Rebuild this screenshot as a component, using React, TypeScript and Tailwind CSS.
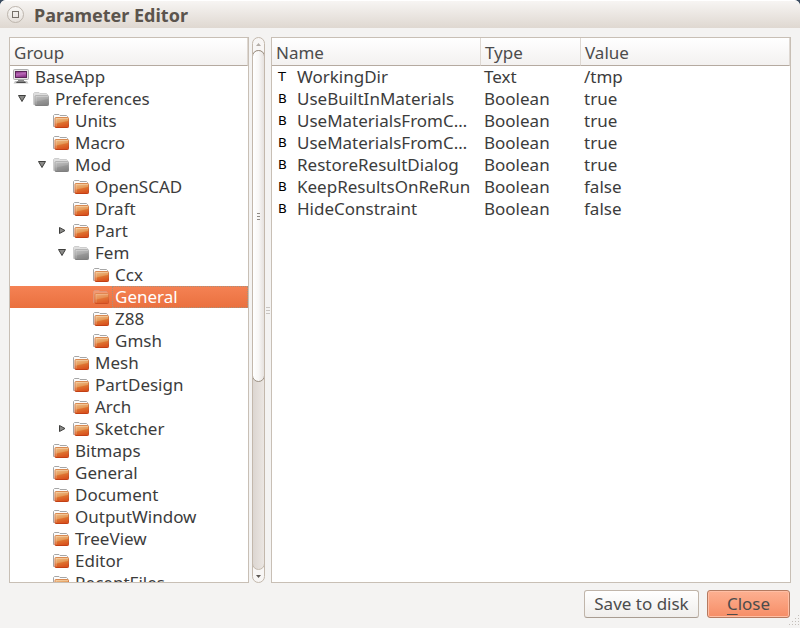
import React from "react";

type Node = { label: string; depth: number; icon?: "computer" | "open"; arrow?: "down" | "right"; selected?: boolean };

const nodes: Node[] = [
  { label: "BaseApp", depth: 0, icon: "computer" },
  { label: "Preferences", depth: 1, icon: "open", arrow: "down" },
  { label: "Units", depth: 2 },
  { label: "Macro", depth: 2 },
  { label: "Mod", depth: 2, icon: "open", arrow: "down" },
  { label: "OpenSCAD", depth: 3 },
  { label: "Draft", depth: 3 },
  { label: "Part", depth: 3, arrow: "right" },
  { label: "Fem", depth: 3, icon: "open", arrow: "down" },
  { label: "Ccx", depth: 4 },
  { label: "General", depth: 4, selected: true },
  { label: "Z88", depth: 4 },
  { label: "Gmsh", depth: 4 },
  { label: "Mesh", depth: 3 },
  { label: "PartDesign", depth: 3 },
  { label: "Arch", depth: 3 },
  { label: "Sketcher", depth: 3, arrow: "right" },
  { label: "Bitmaps", depth: 2 },
  { label: "General", depth: 2 },
  { label: "Document", depth: 2 },
  { label: "OutputWindow", depth: 2 },
  { label: "TreeView", depth: 2 },
  { label: "Editor", depth: 2 },
  { label: "RecentFiles", depth: 2 },
];

const params = [
  ["T", "WorkingDir", "Text", "/tmp"],
  ["B", "UseBuiltInMaterials", "Boolean", "true"],
  ["B", "UseMaterialsFromC…", "Boolean", "true"],
  ["B", "UseMaterialsFromC…", "Boolean", "true"],
  ["B", "RestoreResultDialog", "Boolean", "true"],
  ["B", "KeepResultsOnReRun", "Boolean", "false"],
  ["B", "HideConstraint", "Boolean", "false"],
];

const indent = ["w-0", "w-0", "w-5", "w-10", "w-15"];

function Gradients() {
  return (
    <svg className="absolute size-0" aria-hidden="true">
      <defs>
        <linearGradient id="orange" x1="0.1" y1="0" x2="0.4" y2="1">
          <stop offset="0" stopColor="#efc08c" />
          <stop offset="0.5" stopColor="#e59a58" />
          <stop offset="0.6" stopColor="#de7230" />
          <stop offset="1" stopColor="#d9531e" />
        </linearGradient>
        <linearGradient id="gray" x1="0.1" y1="0" x2="0.4" y2="1">
          <stop offset="0" stopColor="#c2c2c2" />
          <stop offset="0.5" stopColor="#a9a9a9" />
          <stop offset="0.6" stopColor="#979797" />
          <stop offset="1" stopColor="#868686" />
        </linearGradient>
        <linearGradient id="orange-edge" x1="0" y1="0" x2="0" y2="1">
          <stop offset="0" stopColor="#d98a52" />
          <stop offset="1" stopColor="#c23f14" />
        </linearGradient>
        <linearGradient id="gray-edge" x1="0" y1="0" x2="0" y2="1">
          <stop offset="0" stopColor="#b4b4b4" />
          <stop offset="1" stopColor="#7f7f7f" />
        </linearGradient>
        <linearGradient id="screen" x1="0" y1="0" x2="0.3" y2="1">
          <stop offset="0" stopColor="#7d2f7b" />
          <stop offset="0.5" stopColor="#b968b8" />
          <stop offset="1" stopColor="#8a3488" />
        </linearGradient>
      </defs>
    </svg>
  );
}

function Folder({ selected }: { selected?: boolean }) {
  return (
    <svg viewBox="0 0 16 16" className={selected ? "size-4 shrink-0 opacity-70" : "size-4 shrink-0"} aria-hidden="true">
      <path
        d="M1.5 13.5H.5V2.5L1.5 1.5H6L7 2.5H13.5L14.5 3.5V5"
        fill={selected ? "#f4a583" : "#fcfcfc"}
        stroke={selected ? "#d9a088" : "#a6a6a6"}
      />
      <rect x="2" y="4.5" width="13.5" height="10" rx=".8" fill="url(#orange)" stroke="url(#orange-edge)" />
      <path d="M3 13.5V5.5H15" fill="none" stroke="#f9dfbf" opacity=".45" />
    </svg>
  );
}

function OpenFolder() {
  return (
    <svg viewBox="0 0 16 16" className="size-4 shrink-0" aria-hidden="true">
      <path d="M1.5 13.5H.5V2.5L1.5 1.5H6L7 2.5H13.5L14.5 3.5V5" fill="#dedede" stroke="#cdcdcd" />
      <rect x="2" y="4.5" width="13.5" height="10" rx=".8" fill="url(#gray)" stroke="url(#gray-edge)" />
      <path d="M3 13.5V5.5H15" fill="none" stroke="#e4e4e4" opacity=".4" />
    </svg>
  );
}

function Computer() {
  return (
    <svg viewBox="0 0 16 16" className="size-4 shrink-0" aria-hidden="true">
      <rect x=".5" y=".5" width="15" height="10" rx="1" fill="#e4e4e4" stroke="#adadad" />
      <rect x="2.5" y="2.5" width="11" height="6" fill="url(#screen)" stroke="#5a2458" />
      <path d="M5 11H11V12H5Z" fill="#8a8a8a" />
      <path d="M2 12H14L15.5 14.5H.5Z" fill="#c4c4c4" />
      <path d="M4 12.5H12L13 14H3Z" fill="#4a4a4a" />
    </svg>
  );
}

function Arrow({ dir }: { dir: "down" | "right" }) {
  return (
    <svg viewBox="0 0 10 10" className="size-2.5" aria-hidden="true">
      <path d={dir === "down" ? "M1.5 1.5H8.5L5 7.5Z" : "M2.5 1.5V7.5L8 4.5Z"} fill="#8a8a88" stroke="#3f3f3d" />
    </svg>
  );
}

function Grip({ className }: { className: string }) {
  return (
    <div className={`flex flex-col gap-0.5 ${className}`}>
      <i className="h-px" />
      <i className="h-px" />
      <i className="h-px" />
    </div>
  );
}

function ScrollBar() {
  return (
    <div className="ml-[3px] flex w-[13px] shrink-0 flex-col overflow-hidden rounded-full border border-[#c3b8ac] bg-[#f8f6f5]" aria-hidden="true">
      <div className="flex h-3 shrink-0 items-center justify-center">
        <svg viewBox="0 0 5 3" className="h-[3px] w-[5px]"><path d="M0 3L2.5 0L5 3Z" fill="#b3aca6" /></svg>
      </div>
      <div className="-mx-px min-h-0 flex-1 rounded-full border border-[#c3b8ac] bg-linear-to-r from-[#dcd6d1] to-[#ebe6e2]">
        <div className="-mx-px -mt-px flex h-[332px] items-center justify-center rounded-full border border-[#9c9184] bg-linear-to-r from-white via-[#f8f7f6] to-[#e6e2df]">
          <Grip className="w-[3px] [&>i]:bg-[#8f8a84]" />
        </div>
      </div>
      <div className="flex h-3 shrink-0 items-center justify-center">
        <svg viewBox="0 0 5 3" className="h-[3px] w-[5px]"><path d="M0 0L2.5 3L5 0Z" fill="#5c5854" /></svg>
      </div>
    </div>
  );
}

const header = "h-7 border-b border-[#b5aaa0] bg-linear-to-b from-white to-[#f3f1f0] pt-0.5 text-left font-normal text-[#4c4c4c]";

export default function App() {
  return (
    <div className="bg-[#3b4c60]">
      <div className="flex h-screen flex-col overflow-hidden rounded-t-md bg-[#f4f3f2] font-['Noto_Sans','Open_Sans',sans-serif] text-[17px] leading-[22px] text-[#3c3c3c]">
        <Gradients />
        <header className="flex h-7 shrink-0 items-center gap-2.5 border-t border-white bg-linear-to-b from-[#f7f5f3] to-[#dfd8d1] pl-[7px]">
          <button aria-label="Restore window" className="flex size-[17px] items-center justify-center rounded-full border border-[#bdb5ad] bg-linear-to-b from-[#f9f8f6] to-[#e6e0db]">
            <span className="size-[7px] border border-[#77716a]" />
          </button>
          <h1 className="text-[18px] font-bold text-[#5b544d]">Parameter Editor</h1>
        </header>

        <main className="flex min-h-0 flex-1 px-[9px] pt-[9px]">
          <section className="flex w-60 shrink-0 flex-col overflow-hidden border border-[#c8bfb5] bg-white">
            <div className={`${header} flex shrink-0 items-center border-r border-r-[#ded8d2] pl-1`}>Group</div>
            <ul role="tree" aria-label="Group" className="min-h-0 flex-1 overflow-hidden">
              {nodes.map((n, i) => (
                <li
                  key={i}
                  role="treeitem"
                  aria-level={n.depth + 1}
                  aria-selected={!!n.selected}
                  className={`flex h-[22px] items-center pl-[3px] ${n.selected ? "bg-linear-to-b from-[#f58254] to-[#ea703e] text-white" : ""}`}
                >
                  <span className={`shrink-0 ${indent[n.depth]}`} />
                  {n.depth > 0 && (
                    <span className="flex w-5 shrink-0 pl-1">{n.arrow && <Arrow dir={n.arrow} />}</span>
                  )}
                  {n.icon === "computer" ? <Computer /> : n.icon === "open" ? <OpenFolder /> : <Folder selected={n.selected} />}
                  <span className={`ml-[3px] flex-1 self-stretch border border-dotted pl-0.5 leading-5 ${n.selected ? "border-[#a8907c]" : "border-transparent"}`}>
                    {n.label}
                  </span>
                </li>
              ))}
            </ul>
          </section>

          <ScrollBar />
          <div className="flex w-1.5 shrink-0 items-center justify-center" role="separator">
            <Grip className="w-1 [&>i]:bg-[#c9c5c1]" />
          </div>

          <section className="min-w-0 flex-1 overflow-hidden border border-[#c8bfb5] bg-white">
            <table className="w-full table-fixed border-separate border-spacing-0">
              <thead>
                <tr>
                  <th className={`${header} w-[209px] border-r border-r-[#ded8d2] pl-1`}>Name</th>
                  <th className={`${header} w-[100px] border-r border-r-[#ded8d2] pl-1`}>Type</th>
                  <th className={`${header} border-r border-r-[#ded8d2] pl-1`}>Value</th>
                </tr>
              </thead>
              <tbody>
                {params.map(([kind, name, type, value], i) => (
                  <tr key={i} className="h-[22px]">
                    <td className="p-0 whitespace-nowrap">
                      <span className="flex items-center">
                        <span className="w-[25px] shrink-0 pl-1.5 font-['DejaVu_Sans',sans-serif] text-[13px] text-black">{kind}</span>
                        <span>{name}</span>
                      </span>
                    </td>
                    <td className="p-0 pl-[3px]">{type}</td>
                    <td className="p-0 pl-[3px]">{value}</td>
                  </tr>
                ))}
              </tbody>
            </table>
          </section>
        </main>

        <footer className="relative flex shrink-0 justify-end gap-2 px-2.5 pt-[7px] pb-2.5">
          <button className="h-7 w-[115px] rounded-[3px] border border-[#c0b5aa] border-b-[#a99d92] bg-linear-to-b from-white to-[#f0eeec] leading-6 text-[#4c4c4c]">
            Save to disk
          </button>
          <button className="h-7 w-[83px] rounded-[3px] border border-[#b57a60] bg-linear-to-b from-[#fdb091] to-[#f68d66] leading-6 text-[#4c4c4c] inset-shadow-[0_0_0_1px_#ffbea4]">
            <span className="underline underline-offset-4">C</span>lose
          </button>
          <svg viewBox="0 0 12 12" className="absolute right-0 bottom-0.5 size-3" aria-hidden="true">
            {[[10, 1], [7, 4], [10, 4], [4, 7], [7, 7], [10, 7], [1, 10], [4, 10], [7, 10], [10, 10]].map(([x, y]) => (
              <rect key={`${x}-${y}`} x={x} y={y} width="1" height="1" fill="#c4bfba" />
            ))}
          </svg>
        </footer>
      </div>
    </div>
  );
}
